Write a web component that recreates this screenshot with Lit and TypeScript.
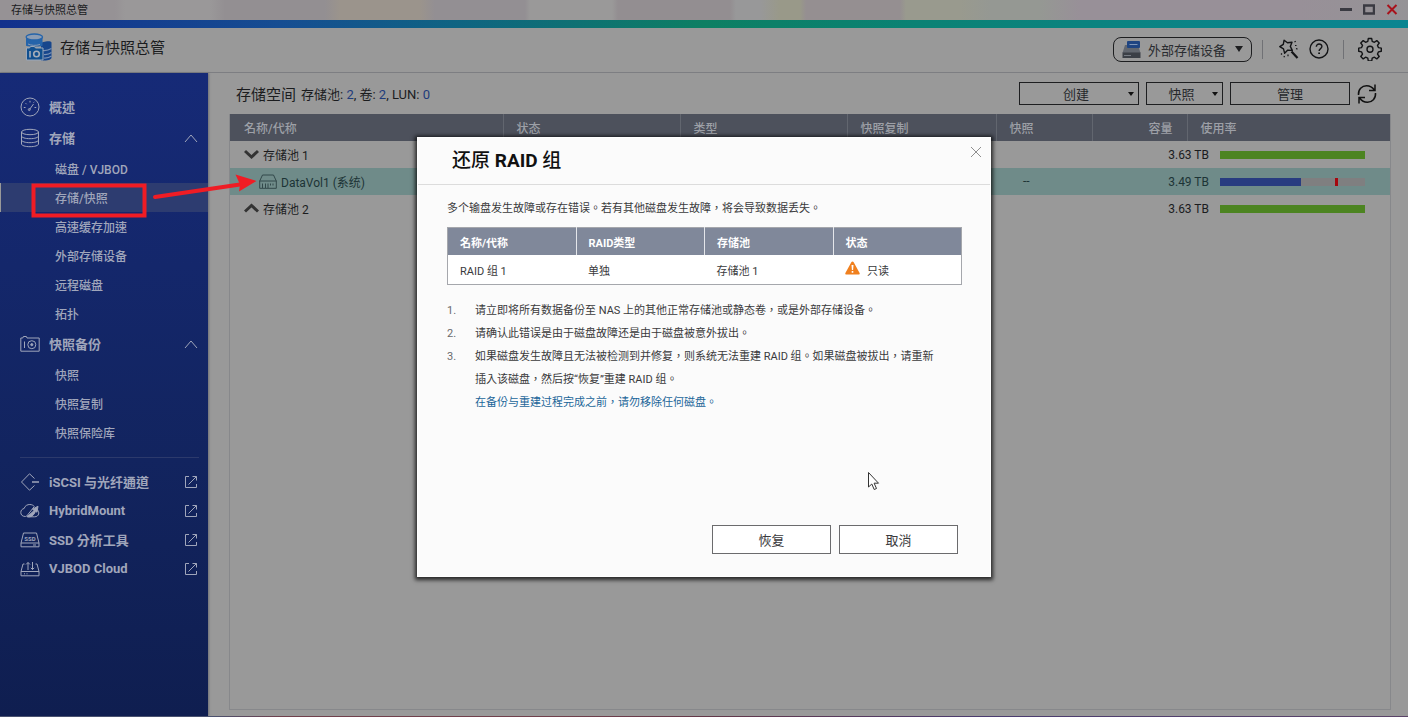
import { LitElement, html, css, svg } from "lit";
import { customElement, property } from "lit/decorators.js";
import { classMap } from "lit/directives/class-map.js";

const UI_FONT = css`Roboto, "Noto Sans CJK TC", "Noto Sans CJK SC", sans-serif`;

const icons: Record<string, unknown> = {
  gauge: svg`<circle cx="10" cy="10" r="9"/><path d="M9.500 12.500l4-5.500"/><circle cx="9.300" cy="12.600" r="1"/><path d="M3.800 10.500h1.700M14.500 10.500h1.700M5.600 6.200l1 1M10 3.800v1.700M13.600 5.600l.8-.8"/>`,
  disks: svg`<ellipse cx="10" cy="4" rx="8.500" ry="2.700"/><path d="M1.500 4v12c0 1.500 3.800 2.700 8.500 2.700s8.500-1.200 8.500-2.700V4M1.500 8c0 1.500 3.800 2.700 8.500 2.700s8.500-1.200 8.500-2.700M1.500 12c0 1.500 3.800 2.700 8.500 2.700s8.500-1.200 8.500-2.700"/>`,
  camera: svg`<path d="M.8 4h2l.6-1.500h3L7 4h12.200v13.200H.8z"/><path d="M4.500 7.500v6.500"/><circle cx="11.800" cy="10.700" r="4"/><circle cx="11.800" cy="10.700" r="1.100" fill="currentColor"/>`,
  iscsi: svg`<path d="M14.500 6.500L9.500 1.800 1.500 10l8 8.200 5-4.700"/><path d="M12 10h7" stroke-width="1.500"/>`,
  hybrid: svg`<path d="M5.500 15.500C2 15.500.8 13.500.8 11.500c0-2.300 1.500-3.600 3.300-4C5 4.500 7.500 3.500 9.800 3.500c2 0 3.500.8 4.500 2L6.800 15z"/><path d="M7 15.800l7.200-6.300-1.700-1.300 5.500-3-1 6-1.500-1c-.8 2.500-3 5.300-5.500 5.600z" fill="currentColor"/><path d="M17 8.500c3 2.500 2.200 7.300-2.500 7.300H8"/>`,
  ssd: svg`<path d="M3.500 3h13l2.500 10H1z"/><path d="M1 13v3.800h18V13M13 15h3"/><text x="10" y="10.500" font-size="6" font-weight="700" text-anchor="middle" fill="currentColor" stroke="none">SSD</text>`,
  cloud: svg`<path d="M4.500 5L3 5 1 12.500v4.300h18v-4.300L17 5h-1.500M1 12.500h18"/><path d="M8 11V3.500M6 5.500l2-2 2 2M12.500 3v7.500M10.800 8.800l1.700 1.700 1.700-1.700"/><path d="M4 14.800h1M6.500 14.800h1"/>`,
};

interface SubItem { label: string; active?: boolean; }
interface Group { icon: string; label: string; items?: SubItem[]; }

const GROUPS: Group[] = [
  { icon: "gauge", label: "概述" },
  {
    icon: "disks", label: "存储",
    items: [
      { label: "磁盘 / VJBOD" },
      { label: "存储/快照", active: true },
      { label: "高速缓存加速" },
      { label: "外部存储设备" },
      { label: "远程磁盘" },
      { label: "拓扑" },
    ],
  },
  {
    icon: "camera", label: "快照备份",
    items: [{ label: "快照" }, { label: "快照复制" }, { label: "快照保险库" }],
  },
];

const TOOLS: Group[] = [
  { icon: "iscsi", label: "iSCSI 与光纤通道" },
  { icon: "hybrid", label: "HybridMount" },
  { icon: "ssd", label: "SSD 分析工具" },
  { icon: "cloud", label: "VJBOD Cloud" },
];

@customElement("side-nav")
export class SideNav extends LitElement {
  static styles = css`
    :host {
      display: block;
      box-sizing: border-box;
      width: 208px;
      flex: none;
      padding-top: 18px;
      background: linear-gradient(#162a77, #12245f 60%, #0f1e50);
      box-shadow: 1px 0 2px #6f7077;
      color: #a0a6bb;
      font-family: ${UI_FONT};
    }
    a { color: inherit; text-decoration: none; }
    ul { list-style: none; margin: 0; padding: 0; }
    .row {
      display: flex;
      align-items: center;
      box-sizing: border-box;
      height: 31px;
      padding: 0 10px 0 20px;
      font-size: 13px;
      font-weight: 700;
    }
    .tool { height: 29px; }
    .icon { width: 20px; height: 20px; flex: none; margin-right: 9px; fill: none; stroke: currentColor; }
    .label { flex: 1; white-space: nowrap; }
    .end { width: 14px; height: 14px; flex: none; fill: none; stroke: currentColor; }
    .subs { margin-top: 1px; }
    .sub {
      display: flex;
      align-items: center;
      box-sizing: border-box;
      height: 29px;
      padding-left: 55px;
      font-size: 12px;
      font-weight: 500;
    }
    .active { background: #2d3c70; box-shadow: inset 1px 0 #999; }
    .rule { border: 0; border-top: 1px solid #2c3a6c; margin: 10px 9px 9px 20px; }
  `;

  private icon(name: string) {
    return html`<svg class="icon" viewBox="0 0 20 20" aria-hidden="true">${icons[name]}</svg>`;
  }

  render() {
    return html`
      <nav aria-label="存储与快照总管">
        ${GROUPS.map((g) => html`
          <a class="row" href="#">
            ${this.icon(g.icon)}<span class="label">${g.label}</span>
            ${g.items ? html`<svg class="end" viewBox="0 0 14 14" aria-hidden="true"><path d="M1 11l6-7 6 7"/></svg>` : ""}
          </a>
          ${g.items ? html`<ul class="subs">
            ${g.items.map((s) => html`<li><a href="#" class=${classMap({ sub: true, active: !!s.active })}>${s.label}</a></li>`)}
          </ul>` : ""}`)}
        <hr class="rule" />
        ${TOOLS.map((t) => html`
          <a class="row tool" href="#">
            ${this.icon(t.icon)}<span class="label">${t.label}</span>
            <svg class="end" viewBox="0 0 14 14" aria-hidden="true"><path d="M5 1.500H1.500v11h11V9M4.500 9.500l8-8M8.500 1.500h4v4"/></svg>
          </a>`)}
      </nav>`;
  }
}

@customElement("usage-bar")
export class UsageBar extends LitElement {
  @property({ type: Number }) used = 100;
  @property({ type: Number }) threshold = 0;
  @property() tone = "green";

  static styles = css`
    :host { display: block; position: relative; width: 145px; height: 8px; background: #7f7f80; }
    .fill { height: 8px; }
    .green { background: #4c8421; }
    .blue { background: #283c80; }
    .mark { position: absolute; top: 0; width: 3px; height: 8px; background: #a5070e; }
  `;

  render() {
    return html`<div class="fill ${this.tone}" style="width:${this.used}%"></div>
      ${this.threshold ? html`<div class="mark" style="left:${this.threshold}%"></div>` : ""}`;
  }
}

@customElement("storage-view")
export class StorageView extends LitElement {
  static styles = css`
    :host {
      display: flex;
      flex-direction: column;
      flex: 1;
      min-width: 0;
      padding: 0 17px 6px 21px;
      font-family: ${UI_FONT};
      color: #1b1c1e;
    }
    .bar { display: flex; align-items: center; height: 41px; padding-left: 7px; }
    .title { margin: 0; font-size: 15px; font-weight: 400; }
    .counts { flex: 1; margin-left: 5px; font-size: 13px; }
    .counts b { font-weight: 400; color: #1f3c7c; }
    .actions { display: flex; align-items: center; gap: 7px; padding-right: 14px; }
    button { font-family: inherit; font-size: 13px; color: #26282b; background: none; padding: 0; }
    .btn {
      display: flex;
      align-items: center;
      width: 120px;
      height: 23px;
      border: 1px solid #1d1e20;
    }
    .btn span { flex: 1; }
    .menu { padding: 0 4px; }
    .short { width: 77px; }
    .caret { width: 6px; height: 4px; fill: #111; }
    .refresh { display: flex; border: 0; }
    .refresh svg { width: 20px; height: 22px; fill: none; stroke: #111; stroke-width: 1.500; }
    .panel { flex: 1; border: 1px solid #87888b; border-top: 0; }
    table { width: 100%; border-collapse: collapse; table-layout: fixed; font-size: 12px; }
    th, td { box-sizing: border-box; height: 27px; padding: 0 14px 1px 14px; font-weight: 400; text-align: left; }
    thead { background: #4d515c; color: #9da0a7; }
    th { font-weight: 500; }
    th + th { border-left: 1px solid #62666f; padding-left: 13px; }
    .c2 { width: 177px; }
    .c3 { width: 167px; }
    .c4 { width: 149px; }
    .c5 { width: 96px; }
    .c6 { width: 95px; }
    .c7 { width: 203px; }
    .right { text-align: right; }
    .name { display: flex; align-items: center; gap: 4px; }
    .vol { padding-left: 15px; }
    .chev { width: 15px; height: 12px; fill: none; stroke: #333; stroke-width: 3; }
    .drive { width: 18px; height: 15px; fill: none; stroke: #32484a; }
    .selected { background: #6f8b89; color: #1d3436; }
    .selected .dash { padding-left: 27px; }
    .cap { padding: 0; }
    .usage { display: flex; align-items: center; gap: 11px; }
    .size { width: 117px; text-align: right; }
  `;

  private caret = html`<svg class="caret" viewBox="0 0 6 4" aria-hidden="true"><path d="M0 0h6L3 4z"/></svg>`;

  render() {
    return html`
      <div class="bar">
        <h1 class="title">存储空间</h1>
        <div class="counts">存储池: <b>2</b>, 卷: <b>2</b>, LUN: <b>0</b></div>
        <div class="actions">
          <button class="btn menu"><span>创建</span>${this.caret}</button>
          <button class="btn menu short"><span>快照</span>${this.caret}</button>
          <button class="btn"><span>管理</span></button>
          <button class="refresh" aria-label="刷新"><svg viewBox="0 0 20 22"><path d="M1.500 12C1 6.500 5 2.800 9.500 2.800c3.500 0 6 1.500 7.800 4.200M18 1.500V7.500h-6M18.500 10c.5 5.500-3.500 9.200-8 9.200-3.500 0-6-1.500-7.800-4.200M2 20.500v-6h6"/></svg></button>
        </div>
      </div>
      <div class="panel">
        <table>
          <thead>
            <tr>
              <th>名称/代称</th><th class="c2">状态</th><th class="c3">类型</th><th class="c4">快照复制</th>
              <th class="c5">快照</th><th class="c6 right">容量</th><th class="c7">使用率</th>
            </tr>
          </thead>
          <tbody>
            <tr>
              <td><div class="name"><svg class="chev" viewBox="0 0 15 12"><path d="M1 3l6.500 6L14 3"/></svg>存储池 1</div></td>
              <td></td><td></td><td></td><td></td>
              <td class="cap" colspan="2"><div class="usage"><span class="size">3.63 TB</span><usage-bar></usage-bar></div></td>
            </tr>
            <tr class="selected">
              <td><div class="name vol"><svg class="drive" viewBox="0 0 18 15"><path d="M3.500 1h11L17.300 7v7.300H.7V7zM.7 7h16.600M3.500 9.500v4.500M6.500 9.500v4.500M9 9.500v4.500M11.500 9.500v2M14 9.500v2"/></svg>DataVol1 (系统)</div></td>
              <td></td><td></td><td></td><td class="dash">--</td>
              <td class="cap" colspan="2"><div class="usage"><span class="size">3.49 TB</span><usage-bar tone="blue" used="56" threshold="79"></usage-bar></div></td>
            </tr>
            <tr>
              <td><div class="name"><svg class="chev" viewBox="0 0 15 12"><path d="M1 9.500l6.500-6 6.500 6"/></svg>存储池 2</div></td>
              <td></td><td></td><td></td><td></td>
              <td class="cap" colspan="2"><div class="usage"><span class="size">3.63 TB</span><usage-bar></usage-bar></div></td>
            </tr>
          </tbody>
        </table>
      </div>`;
  }
}

@customElement("restore-dialog")
export class RestoreDialog extends LitElement {
  static styles = css`
    :host {
      display: block;
      box-sizing: border-box;
      width: 574px;
      background: #fbfbfb;
      border: 1px solid #fff;
      box-shadow: 0 1px 4px 2px rgba(0, 0, 0, 0.75);
      color: #3a3a3c;
      font-family: ${UI_FONT};
      font-size: 11px;
    }
    .dialog { display: flex; flex-direction: column; min-height: 438px; }
    .head {
      display: flex;
      justify-content: space-between;
      align-items: flex-start;
      height: 46px;
      padding: 0 8px 0 34px;
      border-bottom: 1px solid #dcdcdc;
    }
    .title { margin: 0; font-size: 19px; line-height: 46px; font-weight: 500; color: #111; }
    .title b { font-weight: 700; }
    .close { display: flex; border: 0; background: none; padding: 8px 0; }
    .close svg { width: 12px; height: 12px; stroke: #8f8f8f; }
    .body { flex: 1; padding: 12px 28px 0 29px; }
    p { margin: 0; line-height: 23px; }
    table { width: 100%; margin-top: 7px; border-collapse: collapse; table-layout: fixed; background: #fff; border: 1px solid #a5a7ac; }
    th { height: 27px; padding: 0 12px; text-align: left; color: #fff; background: #80889a; font-weight: 700; }
    th + th { border-left: 1px solid #e4e6ea; }
    td { height: 29px; padding: 0 12px; }
    .state { display: flex; align-items: center; gap: 7px; }
    .state svg { width: 15px; height: 14px; margin-bottom: 4px; }
    ol { list-style: none; counter-reset: step; margin: 14px 0 0; padding: 0; line-height: 23px; }
    li { display: flex; counter-increment: step; white-space: nowrap; }
    li::before { content: counter(step) "."; width: 28px; flex: none; color: #6a6a6c; }
    .note { padding-left: 28px; color: #1c6699; }
    .foot { display: flex; justify-content: flex-end; gap: 8px; padding: 0 32px 22px; }
    .foot button {
      width: 119px;
      height: 29px;
      padding: 0;
      border: 1px solid #6b6b6d;
      background: #fff;
      color: #3a3a3c;
      font-family: inherit;
      font-size: 13px;
    }
  `;

  render() {
    return html`
      <div class="dialog" role="dialog" aria-labelledby="title">
        <div class="head">
          <h2 class="title" id="title">还原 <b>RAID</b> 组</h2>
          <button class="close" aria-label="关闭"><svg viewBox="0 0 12 12"><path d="M1 1l10 10M11 1L1 11"/></svg></button>
        </div>
        <div class="body">
          <p>多个输盘发生故障或存在错误。若有其他磁盘发生故障，将会导致数据丢失。</p>
          <table>
            <thead><tr><th>名称/代称</th><th>RAID类型</th><th>存储池</th><th>状态</th></tr></thead>
            <tbody>
              <tr>
                <td>RAID 组 1</td><td>单独</td><td>存储池 1</td>
                <td><div class="state"><svg viewBox="0 0 15 14" aria-hidden="true"><path d="M7.500.5c.5 0 .9.3 1.200.8l5.900 10.600c.4.800 0 1.600-.9 1.600H1.300c-.9 0-1.300-.8-.9-1.600L6.300 1.300c.3-.5.7-.8 1.200-.8z" fill="#f0801f"/><path d="M6.500 4h2l-.4 5H6.900zM6.700 10h1.600v1.700H6.700z" fill="#fff"/></svg>只读</div></td>
              </tr>
            </tbody>
          </table>
          <ol>
            <li>请立即将所有数据备份至 NAS 上的其他正常存储池或静态卷，或是外部存储设备。</li>
            <li>请确认此错误是由于磁盘故障还是由于磁盘被意外拔出。</li>
            <li><span>如果磁盘发生故障且无法被检测到并修复，则系统无法重建 RAID 组。如果磁盘被拔出，请重新<br />插入该磁盘，然后按“恢复”重建 RAID 组。</span></li>
          </ol>
          <p class="note">在备份与重建过程完成之前，请勿移除任何磁盘。</p>
        </div>
        <div class="foot"><button>恢复</button><button>取消</button></div>
      </div>`;
  }
}

@customElement("app-root")
export class AppRoot extends LitElement {
  static styles = css`
    :host {
      display: block;
      position: relative;
      height: 100vh;
      overflow: hidden;
      font-family: ${UI_FONT};
      color: #1b1c1e;
    }
    .window { display: flex; flex-direction: column; height: 100%; background: #999; }
    .titlebar {
      display: flex;
      align-items: center;
      box-sizing: border-box;
      height: 20px;
      padding: 0 10px 2px 11px;
      font-size: 11px;
      background: linear-gradient(90deg, #969295 0 115px, #9a9899 125px 210px, #938f92 225px 325px, #9b948c 340px 420px, #938f93 435px 525px, #9a9999 530px 612px, #938e91 618px 730px, #989899 736px 760px, #999989 780px 800px, #958f91 806px 900px, #999a8e 906px 960px, #959893 990px 1040px, #989098 1080px 1300px, #959396 1408px);
    }
    .caption { flex: 1; }
    .controls { display: flex; gap: 11px; }
    .controls button, .tools button { display: flex; padding: 0; border: 0; background: none; }
    .controls svg { width: 12px; height: 12px; fill: none; }
    .stripe { height: 8px; background: linear-gradient(90deg, #12308c, #164d92 20%, #0f6383 32%, #0d7f63 50%, #0a8274 65%, #0a848b 90%, #0a8591); }
    .header {
      display: flex;
      align-items: center;
      height: 44px;
      padding: 0 26px 0 25px;
      border-bottom: 1px solid #7d7e82;
    }
    .logo { width: 28px; height: 28px; margin: 0 7px 6px 0; }
    .name { flex: 1; font-size: 15px; padding-bottom: 8px; }
    .tools { display: flex; align-items: center; padding-bottom: 2px; }
    .tools .device {
      align-items: center;
      box-sizing: border-box;
      width: 139px;
      height: 25px;
      padding: 0 8px;
      border: 1px solid #1d1e20;
      border-radius: 8px;
      font-family: inherit;
      font-size: 13px;
      color: #2a2c30;
    }
    .device span { flex: 1; text-align: left; }
    .nas { width: 19px; height: 17px; margin-right: 7px; }
    .caret { width: 8px; height: 6px; fill: #1d1e20; }
    .sep { width: 1px; height: 19px; background: #707175; }
    .sep1 { margin: 0 16px 0 10px; }
    .sep2 { margin: 0 14px; }
    .tool { width: 20px; height: 20px; fill: none; stroke: #131416; stroke-width: 1.400; }
    .help { margin-left: 10px; }
    .gear { width: 24px; height: 24px; }
    .content { display: flex; flex: 1; min-height: 0; }
    .edge { height: 1px; background: linear-gradient(90deg, #4a5270 0 15%, #70404c 20% 40%, #643848 50%, #4a3c70 70%, #5b4468); }
    .overlay {
      position: absolute;
      inset: 0;
      display: flex;
      align-items: center;
      justify-content: center;
      padding-bottom: 3px;
    }
    .notes { position: absolute; left: 0; top: 0; width: 270px; height: 230px; pointer-events: none; }
    .cursor { position: absolute; left: 867px; top: 471px; width: 13px; height: 20px; pointer-events: none; }
  `;

  render() {
    return html`
      <div class="window">
        <div class="titlebar">
          <span class="caption">存储与快照总管</span>
          <div class="controls">
            <button aria-label="最小化"><svg viewBox="0 0 12 12"><path d="M0 6.500h12" stroke="#3a3a42" stroke-width="3"/></svg></button>
            <button aria-label="最大化"><svg viewBox="0 0 12 12"><rect x="1" y="2.500" width="10" height="8" stroke="#3a3a42" stroke-width="2.500"/></svg></button>
            <button aria-label="关闭窗口"><svg viewBox="0 0 12 12"><path d="M1.500 2l9 9M10.500 2l-9 9" stroke="#a8121b" stroke-width="2"/></svg></button>
          </div>
        </div>
        <div class="stripe"></div>
        <header class="header">
          <svg class="logo" viewBox="0 0 28 28" aria-hidden="true">
            <path d="M16 10.500c0-1.700 10-3.500 10.500-1v15c0 2-3 3-7 3h-3.500z" fill="#17468c"/>
            <path d="M18 17.500c3 .3 6-.5 8.500-2M19 21.500c3 .2 5.500-.5 7.500-2M19 25c3 .2 5.500-.5 7.500-2" stroke="#7c93b5" stroke-width="1.200" fill="none"/>
            <path d="M1 4v8.500c0 1.500 16.500 1.500 16.500 0V4" fill="#2564aa"/>
            <ellipse cx="9.300" cy="4" rx="8.200" ry="3" fill="#8b9cb3" stroke="#2564aa" stroke-width="1.300"/>
            <path d="M3 11c3 1.600 8 1.800 12 .5" stroke="#8b9cb3" fill="none"/>
            <path d="M1.500 15h3l1-1.500h4l1 1.500h7.500v12h-16.500z" fill="#11508f" stroke="#9aa8bb"/>
            <path d="M5 18v6.500" stroke="#a5adb8" stroke-width="1.600"/>
            <circle cx="11.500" cy="21" r="2.800" fill="none" stroke="#a5adb8" stroke-width="1.600"/>
          </svg>
          <span class="name">存储与快照总管</span>
          <div class="tools">
            <button class="device">
              <svg class="nas" viewBox="0 0 19 17" aria-hidden="true"><path d="M3 4h13l2.500 8H.5z" fill="#62676f"/><path d="M.5 11.500h18V17H.5z" fill="#3b3f46"/><rect x="5" y="0" width="13" height="7" rx="1" fill="#1f4582"/><path d="M7.500 3.500h8" stroke="#7f96b8"/><path d="M2 14.500h7" stroke="#777c84"/></svg>
              <span>外部存储设备</span>
              <svg class="caret" viewBox="0 0 8 6" aria-hidden="true"><path d="M0 0h8L4 6z"/></svg>
            </button>
            <div class="sep sep1"></div>
            <button aria-label="向导"><svg class="tool" viewBox="0 0 20 20"><path d="M5.100 1.200L8.500 3.800 13 3.200 11.300 7.400 13.300 11.400 8.800 11.100 5.600 14.200 4.500 9.800.8 7.700 4.300 5.400z" stroke-linejoin="round"/><path d="M12.500 12.500l6 6.500" stroke-width="2.200"/><path d="M15.500 3l1.200-.8M16 6.500h1.500M17 9.500l1.500.6M3 14.500l-1 1M5.500 17l-.6 1.300M9 15.500v1.800" stroke-width="1.200"/></svg></button>
            <button class="help" aria-label="帮助"><svg class="tool" viewBox="0 0 20 20"><circle cx="10" cy="10" r="9"/><path d="M7.300 7.800c0-3.800 5.600-3.500 5.600-.3 0 2-2.800 2.200-2.800 4.400"/><path d="M10.100 13.400v1.600" stroke-width="1.800"/></svg></button>
            <div class="sep sep2"></div>
            <button aria-label="设置"><svg class="tool gear" viewBox="0 0 24 24"><path d="M10.300 1.500h3.400l.5 2.900 2.200.9 2.400-1.700 2.400 2.400-1.700 2.400.9 2.200 2.900.5v3.200l-2.900.6-.9 2.200 1.700 2.400-2.400 2.400-2.400-1.700-2.200.9-.5 2.900h-3.400l-.5-2.900-2.200-.9-2.400 1.700-2.400-2.400 1.700-2.400-.9-2.200-2.900-.6v-3.200l2.900-.5.9-2.200-1.700-2.400 2.400-2.400 2.400 1.700 2.200-.9z" stroke-linejoin="round"/><circle cx="12" cy="12.300" r="3"/></svg></button>
          </div>
        </header>
        <div class="content">
          <side-nav></side-nav>
          <storage-view></storage-view>
        </div>
        <div class="edge"></div>
      </div>
      <svg class="notes" viewBox="0 0 270 230" aria-hidden="true">
        <rect x="33.500" y="185.500" width="111" height="30" fill="none" stroke="#f01c24" stroke-width="4"/>
        <path d="M155 197l85-12.500" stroke="#f01c24" stroke-width="4" stroke-linecap="round"/>
        <path d="M235.500 174.500L256.500 181l-17.500 10.500 1-7z" fill="#f01c24"/>
      </svg>
      <div class="overlay"><restore-dialog></restore-dialog></div>
      <svg class="cursor" viewBox="0 0 13 20" aria-hidden="true"><path d="M1.500 1.500v14.500l3.300-3 2.400 5.500 2.300-1-2.400-5.300h4.400z" fill="#fff" stroke="#333"/></svg>
    `;
  }
}
